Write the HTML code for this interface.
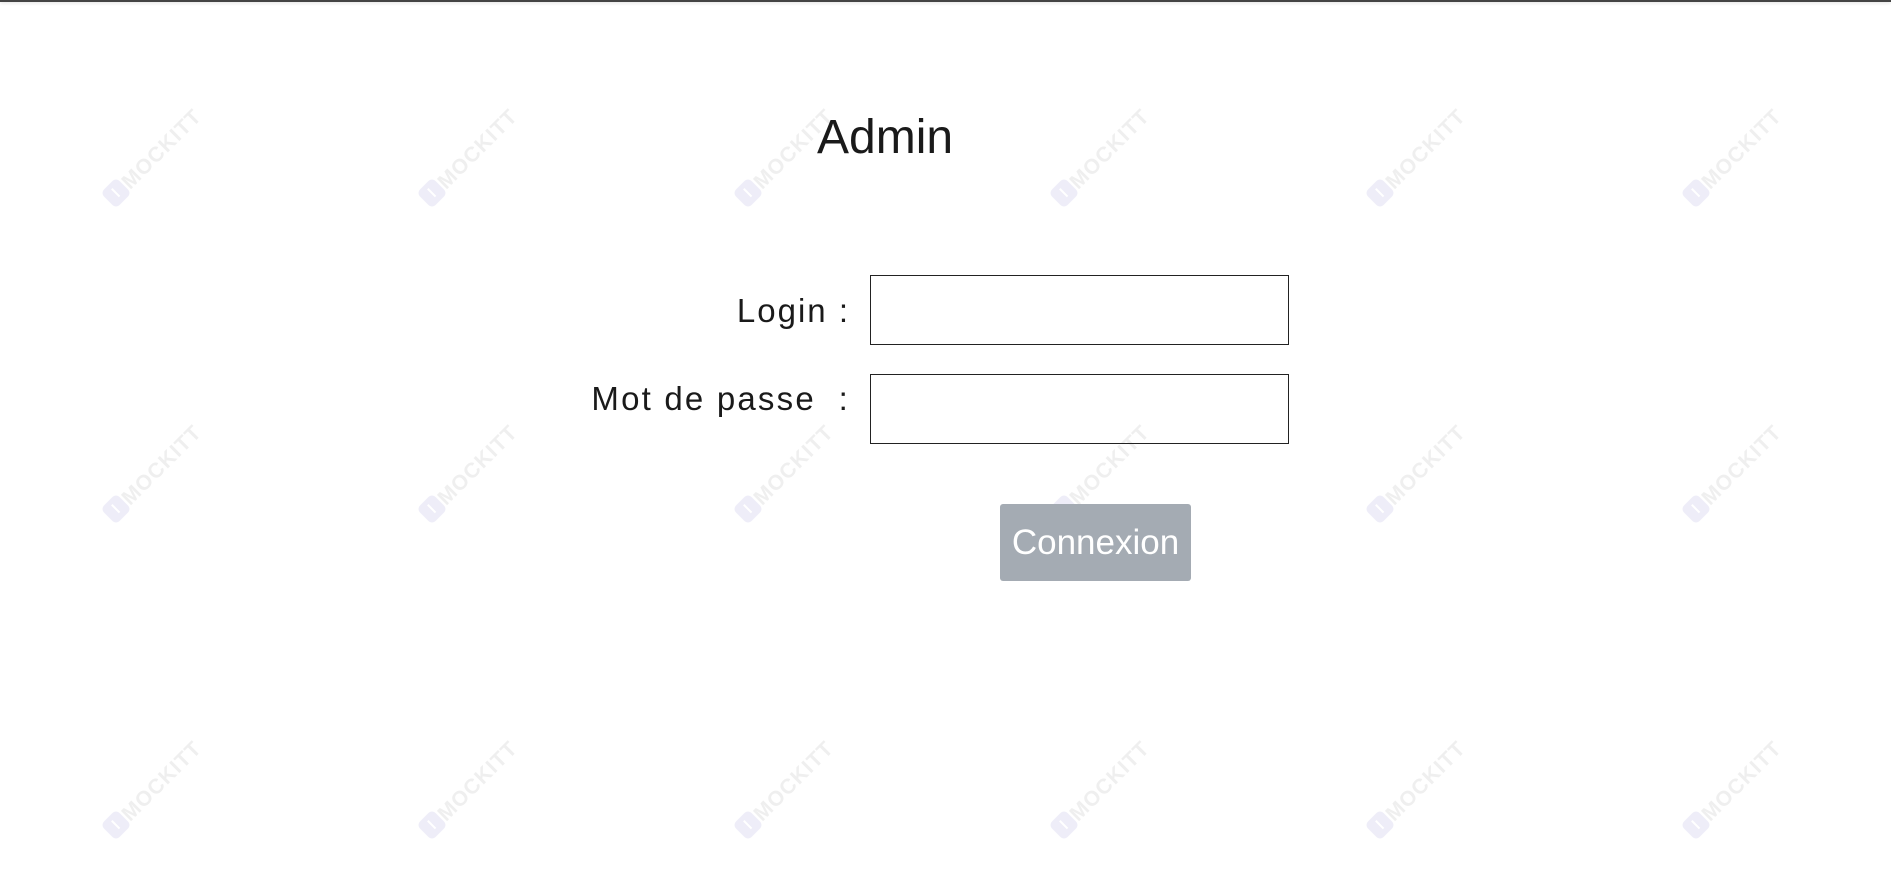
<!DOCTYPE html>
<html><head><meta charset="utf-8"><style>
html,body{margin:0;padding:0;width:1891px;height:895px;overflow:hidden;background:#fff;font-family:"Liberation Sans",sans-serif;}
body{position:relative;}
.top{position:absolute;left:0;top:0;width:1891px;height:2px;background:#444;box-shadow:0 1px 3px rgba(0,0,0,.15);}
.wm{position:absolute;width:0;height:0;}
.wm .ic{position:absolute;left:-11px;top:-11px;width:22px;height:22px;border-radius:5px;background:#eeedf8;transform:rotate(45deg);}
.wm .ic:after{content:"";position:absolute;left:5px;top:10px;width:11px;height:2px;background:#fff;}
.wm .tx{position:absolute;left:17px;top:-21px;font-size:21px;font-weight:bold;color:#efefef;letter-spacing:1px;transform:rotate(-45deg);transform-origin:0 100%;white-space:nowrap;line-height:21px;}
.t{position:absolute;color:#1a1a1a;white-space:nowrap;}
.box{position:absolute;border:1px solid #222;background:transparent;box-sizing:border-box;}
.btn{position:absolute;left:1000px;top:504px;width:191px;height:77px;background:#a4abb3;border-radius:3px;color:#fff;font-size:35px;text-align:center;line-height:77px;}
</style></head><body>
<div class="top"></div>
<div id="wms"></div>
<script>
var xs=[116,432,748,1064,1380,1696],ys=[193,509,825],h="";
for(var i=0;i<ys.length;i++)for(var j=0;j<xs.length;j++)h+='<div class="wm" style="left:'+xs[j]+'px;top:'+ys[i]+'px"><div class="ic"></div><div class="tx">MOCKITT</div></div>';
document.getElementById("wms").innerHTML=h;
</script>
<div class="t" style="left:817px;top:110px;font-size:48px;">Admin</div>
<div class="t" style="left:500px;width:350px;text-align:right;top:292px;font-size:33px;letter-spacing:2px;">Login :</div>
<div class="t" style="left:480px;width:370px;text-align:right;top:380px;font-size:33px;letter-spacing:2.2px;">Mot de passe&nbsp;&nbsp;:</div>
<div class="box" style="left:870px;top:275px;width:419px;height:70px;"></div>
<div class="box" style="left:870px;top:374px;width:419px;height:70px;"></div>
<div class="btn">Connexion</div>
</body></html>
